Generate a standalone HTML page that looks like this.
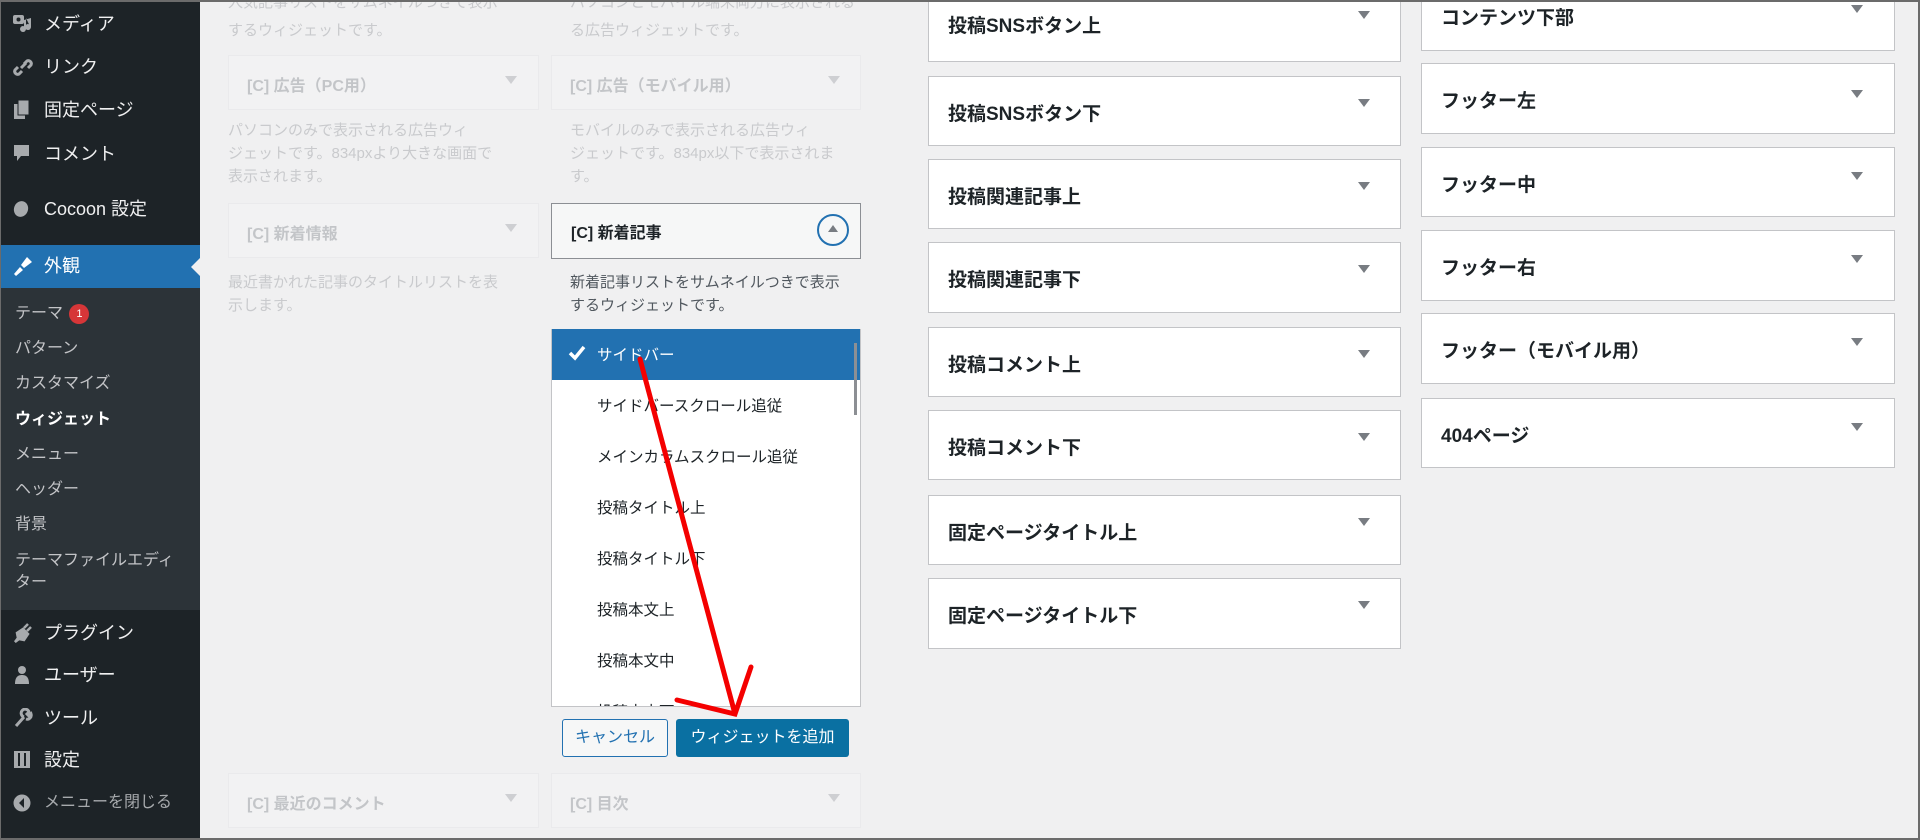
<!DOCTYPE html>
<html><head><meta charset="utf-8">
<style>
*{box-sizing:border-box;margin:0;padding:0}
body{width:1920px;height:840px;overflow:hidden;background:#f0f0f1;font-family:"Liberation Sans","Noto Sans CJK JP",sans-serif;position:relative}
.frame{position:absolute;left:0;top:0;width:1920px;height:840px;border:2px solid #6b6b6b;border-left-width:1px;pointer-events:none;z-index:50}
.side{position:absolute;left:0;top:0;width:200px;height:840px;background:#1d2327}
.mi{position:absolute;left:0;width:200px;color:#f0f0f1;font-size:18px;line-height:24px}
.mi .ic{position:absolute;left:12px;top:2px;width:22px;height:20px}
.mi span.t{position:absolute;left:44px;top:0;white-space:nowrap}
.cur{position:absolute;left:0;top:245px;width:200px;height:43px;background:#2271b1}
.cur:after{content:"";position:absolute;right:0;top:13px;border:9px solid transparent;border-right-color:#f0f0f1}
.sub{position:absolute;left:0;top:288px;width:200px;height:322px;background:#2c3338}
.si{position:absolute;left:15px;color:#c3c4c7;font-size:16px;line-height:22px;white-space:nowrap}
.w{position:absolute;background:#fff;border:1px solid #c3c4c7}
.w b{position:absolute;font-size:19px;color:#1d2327;font-weight:bold;white-space:nowrap}
.tri{position:absolute;width:0;height:0;border-left:6px solid transparent;border-right:6px solid transparent;border-top:8px solid #787c82}
.fade{opacity:.28}
.fw{position:absolute;background:#f6f7f7;border:1px solid #dcdcde;height:55px}
.fw b{position:absolute;left:18px;top:16px;font-size:16px;color:#50575e;white-space:nowrap}
.desc{position:absolute;font-size:15px;line-height:22px;color:#646970;white-space:nowrap}
.li{position:absolute;left:45px;font-size:15.5px;color:#1d2327;white-space:nowrap}
</style></head><body>
<div class="side">
 <div class="mi" style="top:12px"><svg class="ic" viewBox="0 0 22 20"><rect x="1" y="1" width="11" height="9" rx="2" fill="#a7aaad"/><circle cx="6.5" cy="5.5" r="2" fill="#1d2327"/><path d="M14 4v11a3 3 0 1 1-2-2.8V6l7-2v9a3 3 0 1 1-2-2.8" fill="#a7aaad"/></svg><span class="t">メディア</span></div>
 <div class="mi" style="top:55px"><svg class="ic" viewBox="0 0 22 20"><path d="M9 11l5-5M6 10l-3 3a3 3 0 0 0 4 4l3-3M12 7l3-3a3 3 0 0 1 4 4l-3 3" stroke="#a7aaad" stroke-width="3" fill="none"/></svg><span class="t">リンク</span></div>
 <div class="mi" style="top:98px"><svg class="ic" viewBox="0 0 22 20"><rect x="2" y="4" width="11" height="15" fill="#a7aaad"/><rect x="6" y="0" width="11" height="15" fill="#a7aaad" stroke="#1d2327"/></svg><span class="t">固定ページ</span></div>
 <div class="mi" style="top:142px"><svg class="ic" viewBox="0 0 22 20"><path d="M2 1h15v11h-8l-4 5v-5H2z" fill="#a7aaad"/></svg><span class="t">コメント</span></div>
 <div class="mi" style="top:197px"><svg class="ic" viewBox="0 0 22 20"><ellipse cx="9" cy="10" rx="7" ry="8" fill="#a7aaad" transform="rotate(20 9 10)"/></svg><span class="t">Cocoon 設定</span></div>
 <div class="cur"></div>
 <div class="mi" style="top:254px"><svg class="ic" viewBox="0 0 22 20"><path d="M2 18l6-7 3 3-7 6zM9 9l6-8 5 5-8 6z" fill="#fff"/></svg><span class="t" style="color:#fff">外観</span></div>
 <div class="sub"></div>
 <div class="si" style="top:303px">テーマ <span style="display:inline-block;width:20px;height:20px;border-radius:10px;background:#d63638;color:#fff;font-size:11px;line-height:20px;text-align:center;vertical-align:1px;margin-left:2px">1</span></div>
 <div class="si" style="top:338px">パターン</div>
 <div class="si" style="top:373px">カスタマイズ</div>
 <div class="si" style="top:409px;color:#fff;font-weight:bold">ウィジェット</div>
 <div class="si" style="top:444px">メニュー</div>
 <div class="si" style="top:479px">ヘッダー</div>
 <div class="si" style="top:514px">背景</div>
 <div class="si" style="top:550px">テーマファイルエディ<br>ター</div>
 <div class="mi" style="top:621px"><svg class="ic" viewBox="0 0 22 20"><path d="M3 19l3-4-1-5 6-4 5 5-4 6-5-1zM12 5l4-4M15 8l4-4" stroke="#a7aaad" stroke-width="2.5" fill="#a7aaad"/></svg><span class="t">プラグイン</span></div>
 <div class="mi" style="top:663px"><svg class="ic" viewBox="0 0 22 20"><circle cx="10" cy="5" r="4" fill="#a7aaad"/><path d="M3 19c0-7 3-9 7-9s7 2 7 9z" fill="#a7aaad"/></svg><span class="t">ユーザー</span></div>
 <div class="mi" style="top:706px"><svg class="ic" viewBox="0 0 22 20"><path d="M4 18l8-9M12 9a4 4 0 1 1 5-5l-2 2 2 2 2-2a4 4 0 0 1-5 5" stroke="#a7aaad" stroke-width="3" fill="none"/></svg><span class="t">ツール</span></div>
 <div class="mi" style="top:748px"><svg class="ic" viewBox="0 0 22 20"><rect x="2" y="1" width="16" height="17" fill="#a7aaad"/><path d="M7 3v13M13 3v13" stroke="#1d2327" stroke-width="2"/></svg><span class="t">設定</span></div>
 <div class="mi" style="top:791px;font-size:16px;color:#a7aaad"><svg class="ic" viewBox="0 0 22 20"><circle cx="10" cy="10" r="8.5" fill="#a7aaad"/><path d="M12 5l-5 5 5 5z" fill="#1d2327"/></svg><span class="t">メニューを閉じる</span></div>
</div>

<!-- faded columns -->
<div class="fade">
 <div class="desc" style="left:228px;top:-8px">人気記事リストをサムネイルつきで表示</div>
 <div class="desc" style="left:228px;top:20px">するウィジェットです。</div>
 <div class="desc" style="left:570px;top:-8px">パソコンとモバイル端末両方に表示される</div>
 <div class="desc" style="left:570px;top:20px">る広告ウィジェットです。</div>
 <div class="fw" style="left:228px;top:55px;width:311px"><b>[C] 広告（PC用）</b><div class="tri" style="left:276px;top:20px"></div></div>
 <div class="fw" style="left:551px;top:55px;width:310px"><b>[C] 広告（モバイル用）</b><div class="tri" style="left:276px;top:20px"></div></div>
 <div class="desc" style="left:228px;top:120px">パソコンのみで表示される広告ウィ</div>
 <div class="desc" style="left:228px;top:143px">ジェットです。834pxより大きな画面で</div>
 <div class="desc" style="left:228px;top:166px">表示されます。</div>
 <div class="desc" style="left:570px;top:120px">モバイルのみで表示される広告ウィ</div>
 <div class="desc" style="left:570px;top:143px">ジェットです。834px以下で表示されま</div>
 <div class="desc" style="left:570px;top:166px">す。</div>
 <div class="fw" style="left:228px;top:203px;width:311px"><b>[C] 新着情報</b><div class="tri" style="left:276px;top:20px"></div></div>
 <div class="desc" style="left:228px;top:272px">最近書かれた記事のタイトルリストを表</div>
 <div class="desc" style="left:228px;top:295px">示します。</div>
 <div class="fw" style="left:228px;top:773px;width:311px"><b>[C] 最近のコメント</b><div class="tri" style="left:276px;top:20px"></div></div>
 <div class="fw" style="left:551px;top:773px;width:310px"><b>[C] 目次</b><div class="tri" style="left:276px;top:20px"></div></div>
</div>

<!-- active widget -->
<div style="position:absolute;left:551px;top:203px;width:310px;height:56px;background:#f6f7f7;border:1px solid #8c8f94">
 <b style="position:absolute;left:19px;top:15px;font-size:16px;color:#1d2327">[C] 新着記事</b>
 <div style="position:absolute;left:265px;top:10px;width:32px;height:32px;border:2px solid #2271b1;border-radius:50%"></div>
 <div style="position:absolute;left:276px;top:21px;border-left:5px solid transparent;border-right:5px solid transparent;border-bottom:7px solid #787c82"></div>
</div>
<div class="desc" style="left:570px;top:272px;color:#50575e">新着記事リストをサムネイルつきで表示</div>
<div class="desc" style="left:570px;top:295px;color:#50575e">するウィジェットです。</div>

<div style="position:absolute;left:551px;top:329px;width:310px;height:378px;background:#fff;border:1px solid #c3c4c7;border-top:none;overflow:hidden">
 <div style="position:absolute;left:0;top:0;width:310px;height:51px;background:#2271b1"></div>
 <svg style="position:absolute;left:16px;top:16px" width="18" height="16" viewBox="0 0 18 16"><path d="M2 8l5 5L16 2" stroke="#fff" stroke-width="3.5" fill="none"/></svg>
 <div class="li" style="top:14px;color:#fff">サイドバー</div>
 <div class="li" style="top:65px">サイドバースクロール追従</div>
 <div class="li" style="top:116px">メインカラムスクロール追従</div>
 <div class="li" style="top:167px">投稿タイトル上</div>
 <div class="li" style="top:218px">投稿タイトル下</div>
 <div class="li" style="top:269px">投稿本文上</div>
 <div class="li" style="top:320px">投稿本文中</div>
 <div class="li" style="top:371px">投稿本文下</div>
 <div style="position:absolute;left:302px;top:14px;width:3px;height:72px;background:#8c8f94"></div>
</div>

<div style="position:absolute;left:562px;top:719px;width:106px;height:38px;border:1px solid #2271b1;border-radius:3px;background:#f6f7f7;color:#2271b1;font-size:16px;line-height:36px;text-align:center">キャンセル</div>
<div style="position:absolute;left:676px;top:719px;width:173px;height:38px;border-radius:3px;background:#0a70a2;color:#fff;font-size:16px;line-height:38px;text-align:center">ウィジェットを追加</div>

<!-- right columns -->
<div class="w" style="left:928px;top:-8px;width:473px;height:70px"><b style="left:19px;top:18px">投稿SNSボタン上</b><div class="tri" style="left:429px;top:18px"></div></div>
<div class="w" style="left:928px;top:76px;width:473px;height:70px"><b style="left:19px;top:22px">投稿SNSボタン下</b><div class="tri" style="left:429px;top:22px"></div></div>
<div class="w" style="left:928px;top:159px;width:473px;height:70px"><b style="left:19px;top:22px">投稿関連記事上</b><div class="tri" style="left:429px;top:22px"></div></div>
<div class="w" style="left:928px;top:242px;width:473px;height:71px"><b style="left:19px;top:22px">投稿関連記事下</b><div class="tri" style="left:429px;top:22px"></div></div>
<div class="w" style="left:928px;top:327px;width:473px;height:70px"><b style="left:19px;top:22px">投稿コメント上</b><div class="tri" style="left:429px;top:22px"></div></div>
<div class="w" style="left:928px;top:410px;width:473px;height:70px"><b style="left:19px;top:22px">投稿コメント下</b><div class="tri" style="left:429px;top:22px"></div></div>
<div class="w" style="left:928px;top:495px;width:473px;height:70px"><b style="left:19px;top:22px">固定ページタイトル上</b><div class="tri" style="left:429px;top:22px"></div></div>
<div class="w" style="left:928px;top:578px;width:473px;height:71px"><b style="left:19px;top:22px">固定ページタイトル下</b><div class="tri" style="left:429px;top:22px"></div></div>

<div class="w" style="left:1421px;top:-20px;width:474px;height:71px"><b style="left:19px;top:22px">コンテンツ下部</b><div class="tri" style="left:429px;top:24px"></div></div>
<div class="w" style="left:1421px;top:63px;width:474px;height:71px"><b style="left:19px;top:22px">フッター左</b><div class="tri" style="left:429px;top:26px"></div></div>
<div class="w" style="left:1421px;top:147px;width:474px;height:70px"><b style="left:19px;top:22px">フッター中</b><div class="tri" style="left:429px;top:24px"></div></div>
<div class="w" style="left:1421px;top:230px;width:474px;height:71px"><b style="left:19px;top:22px">フッター右</b><div class="tri" style="left:429px;top:24px"></div></div>
<div class="w" style="left:1421px;top:313px;width:474px;height:71px"><b style="left:19px;top:22px">フッター（モバイル用）</b><div class="tri" style="left:429px;top:24px"></div></div>
<div class="w" style="left:1421px;top:398px;width:474px;height:70px"><b style="left:19px;top:22px">404ページ</b><div class="tri" style="left:429px;top:24px"></div></div>

<!-- red arrow -->
<svg style="position:absolute;left:0;top:0;z-index:40" width="1920" height="840">
 <path d="M640 359L735 714M677 700L735 714L751 667" stroke="#f40000" stroke-width="5" fill="none" stroke-linecap="round"/>
</svg>
<div class="frame"></div>
</body></html>
